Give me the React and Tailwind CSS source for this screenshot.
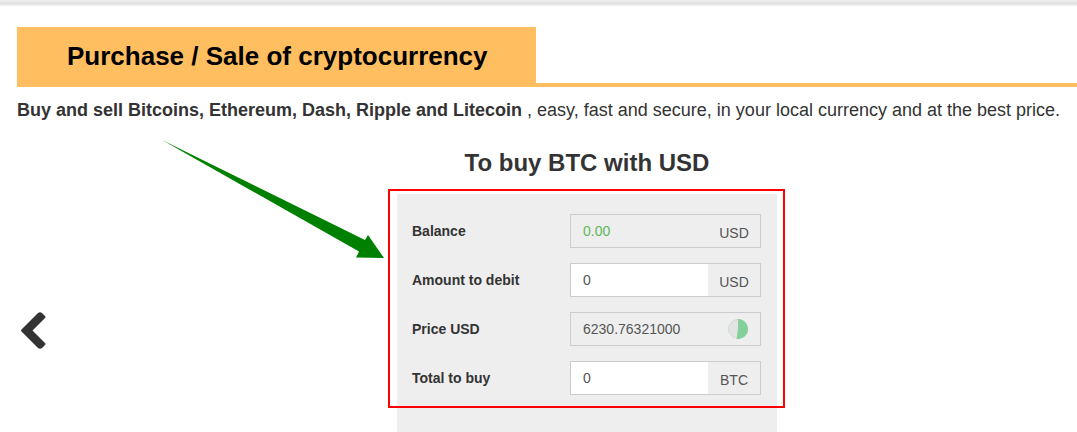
import React, { useState } from 'react';

const fields = [
  { id: 'balance', label: 'Balance', value: '0.00', unit: 'USD', readOnly: true, color: 'text-[#5cb85c]' },
  { id: 'amount', label: 'Amount to debit', value: '0', unit: 'USD' },
  { id: 'price', label: 'Price USD', value: '6230.76321000', timer: true, readOnly: true },
  { id: 'total', label: 'Total to buy', value: '0', unit: 'BTC' },
];

const RefreshTimer = () => (
  <svg width="20" height="20" viewBox="0 0 20 20" aria-hidden="true">
    <circle cx="10" cy="10" r="10" fill="#e3e3e3" />
    <circle cx="10" cy="10" r="9.5" fill="none" stroke="#86d19b" strokeOpacity="0.35" strokeDasharray="2 1" />
    <path d="M10 0 A10 10 0 1 1 8.6 19.9 L10 10 Z" fill="#83d09a" />
  </svg>
);

const FieldRow = ({ field, value, onChange }) => (
  <div className="flex items-center">
    <label htmlFor={field.id} className="w-[158px] shrink-0 text-sm font-bold text-[#333]">
      {field.label}
    </label>
    <div className="flex h-[34px] min-w-0 flex-1 border border-[#ccc]">
      <input
        id={field.id}
        type="text"
        value={value}
        readOnly={field.readOnly}
        onChange={(e) => onChange(field.id, e.target.value)}
        className={`min-w-0 flex-1 pl-3 text-sm outline-none ${field.readOnly ? 'bg-[#eee]' : 'bg-white'} ${field.color || 'text-[#555]'}`}
      />
      {field.timer ? (
        <span className="flex w-[52px] items-center justify-center pr-2 pl-4">
          <RefreshTimer />
        </span>
      ) : (
        <span className="flex w-[52px] items-center justify-center bg-[#eee] pt-1 text-sm text-[#555]">
          {field.unit}
        </span>
      )}
    </div>
  </div>
);

const App = () => {
  const [values, setValues] = useState(Object.fromEntries(fields.map(f => [f.id, f.value])));

  const handleChange = (id, value) => {
    setValues(prev => ({ ...prev, [id]: value }));
  };

  return (
    <div className="overflow-x-hidden bg-white font-['Liberation_Sans',Arial,sans-serif] text-[#333]">
      {/* Navbar shadow */}
      <div className="h-[7px] bg-linear-to-b from-[#eee] via-[#dfdfdf] to-white" />

      <div className="mt-5 ml-[17px]">
        <header className="flex border-b-4 border-[#ffbf60]">
          <h1 className="flex h-14 items-center bg-[#ffbf60] pt-0.5 pr-12 pl-[50px] text-[26px] font-bold text-black">
            Purchase / Sale of cryptocurrency
          </h1>
        </header>
        <p className="mt-[10px] text-lg leading-[26px]">
          <strong>Buy and sell Bitcoins, Ethereum, Dash, Ripple and Litecoin</strong> , easy, fast and secure, in your
          local currency and at the best price.
        </p>
      </div>

      <div className="flex">
        <button type="button" aria-label="Previous" className="mt-[106px] w-[97px] self-center pl-[21px]">
          <svg width="25" height="37" viewBox="0 0 25 37" fill="#333">
            <path d="M0.5 17.5 L17 1 Q19 -0.7 21 1 L24 4 Q25 5 24 6 L11.5 18.5 L24 31 Q25 32 24 33 L21 36 Q19 37.5 17 36 L0.5 19.5 Q-0.4 18.5 0.5 17.5 Z" />
          </svg>
        </button>

        <div className="flex flex-1 flex-col items-center">
          <h2 className="mt-6 text-2xl leading-[32px] font-bold">To buy BTC with USD</h2>

          <div className="relative mt-[15px] w-[380px]">
            <form className="flex flex-col gap-[15px] bg-[#eee] pt-5 pr-4 pb-[37px] pl-[15px]">
              {fields.map(field => (
                <FieldRow key={field.id} field={field} value={values[field.id]} onChange={handleChange} />
              ))}
            </form>

            {/* Highlight around the form and its pointer */}
            <div className="pointer-events-none absolute -top-[5px] -right-2 bottom-6 -left-[9px] border-2 border-[#f00]" />
            <svg
              width="222"
              height="120"
              viewBox="0 0 222 120"
              fill="#008000"
              className="pointer-events-none absolute -top-[54px] right-full mr-[13px]"
              aria-hidden="true"
            >
              <path d="M0 0 L203 100 L206 95 L222 118 L194 117.5 L197 111.5 Z" />
            </svg>
          </div>
        </div>
      </div>
    </div>
  );
};

export default App;
